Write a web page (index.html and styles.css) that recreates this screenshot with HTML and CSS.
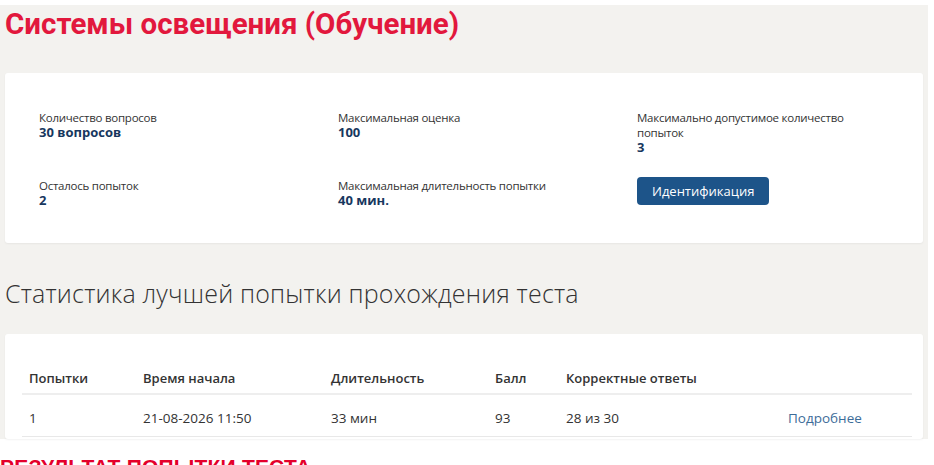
FILE: index.html
```html
<!DOCTYPE html>
<html lang="ru">
<head>
  <meta charset="UTF-8" />
  <title>Системы освещения (Обучение)</title>
  <meta name="viewport" content="width=device-width, initial-scale=1.0"/>
  <link rel="stylesheet" href="styles.css">
</head>
<body>
  <div class="test-page">
    <h1 class="test-title">Системы освещения (Обучение)</h1>

    <div class="card info-card">
      <div class="info-grid">
        <div class="info-item">
          <div class="info-label">Количество вопросов</div>
          <div class="info-value">30 вопросов</div>
        </div>
        <div class="info-item">
          <div class="info-label">Максимальная оценка</div>
          <div class="info-value">100</div>
        </div>
        <div class="info-item">
          <div class="info-label">Максимально допустимое количество попыток</div>
          <div class="info-value">3</div>
        </div>
        <div class="info-item">
          <div class="info-label">Осталось попыток</div>
          <div class="info-value">2</div>
        </div>
        <div class="info-item">
          <div class="info-label">Максимальная длительность попытки</div>
          <div class="info-value">40 мин.</div>
        </div>
        <div class="info-item">
          <button class="ident-btn">Идентификация</button>
        </div>
      </div>
    </div>

    <h2 class="section-title">Статистика лучшей попытки прохождения теста</h2>

    <div class="card stats-card">
      <table class="stats-table">
        <thead>
          <tr>
            <th class="col-try">Попытки</th>
            <th class="col-start">Время начала</th>
            <th class="col-dur">Длительность</th>
            <th class="col-score">Балл</th>
            <th class="col-correct">Корректные ответы</th>
            <th class="col-more"></th>
          </tr>
        </thead>
        <tbody>
          <tr>
            <td>1</td>
            <td>21-08-2026 11:50</td>
            <td>33 мин</td>
            <td>93</td>
            <td>28 из 30</td>
            <td><a href="#" class="more-link">Подробнее</a></td>
          </tr>
        </tbody>
      </table>
    </div>
  </div>

  <h3 class="result-title">РЕЗУЛЬТАТ ПОПЫТКИ ТЕСТА</h3>
</body>
</html>
```

FILE: styles.css
```css
* {
  margin: 0;
  padding: 0;
  box-sizing: border-box;
}

body {
  font-family: 'Open Sans', 'Noto Sans', sans-serif;
  background: #fff;
  color: #333;
  padding-top: 5px;
}

.test-page {
  width: 928px;
  background: #f3f2ef;
  padding: 0 5px;
}

.test-title {
  font-family: Roboto, 'Noto Sans', sans-serif;
  font-size: 29.5px;
  line-height: 36px;
  font-weight: 700;
  color: #e2183d;
  padding-top: 1px;
  margin-bottom: 31px;
}

.card {
  background: #fff;
  border-radius: 3px;
  box-shadow: 0 1px 2px rgba(0,0,0,0.05);
}

.info-card {
  padding: 37px 34px 35px;
}

.info-grid {
  display: grid;
  grid-template-columns: 299px 299px 1fr;
  row-gap: 23px;
}

.info-label {
  font-size: 11.5px;
  line-height: 15px;
  letter-spacing: -0.25px;
  color: #333;
}

.info-value {
  font-size: 13px;
  line-height: 15px;
  font-weight: 700;
  color: #17375e;
}

.ident-btn {
  font-family: 'Open Sans', 'Noto Sans', sans-serif;
  font-size: 13px;
  height: 28px;
  padding: 0 15px;
  background: #1d5489;
  color: #fff;
  border: none;
  border-radius: 4px;
  margin-top: -1px;
}

.section-title {
  font-size: 25px;
  line-height: 30px;
  font-weight: 300;
  letter-spacing: 0.2px;
  color: #333;
  margin: 35px 0 26px;
}

.stats-card {
  padding: 26px 11px 2px 17px;
}

.stats-table {
  width: 890px;
  border-collapse: collapse;
  font-size: 13.5px;
  line-height: 20px;
  text-align: left;
}

.stats-table th {
  font-size: 13px;
  font-weight: 600;
  padding: 8px 7px 5px;
  border-bottom: 2px solid #eee;
}

.stats-table td {
  padding: 13px 7px 8px;
  border-bottom: 1px solid #e8e8e8;
}

.col-try { width: 114px; }
.col-start { width: 188px; }
.col-dur { width: 164px; }
.col-score { width: 71px; }
.col-correct { width: 222px; }
.col-more { width: 131px; }

.more-link {
  color: #3d6c99;
  text-decoration: none;
}

.result-title {
  font-family: 'Liberation Sans', Arial, sans-serif;
  font-size: 21px;
  line-height: 24px;
  font-weight: 700;
  letter-spacing: 0.2px;
  color: #e4002b;
  margin-top: 16px;
}
```
